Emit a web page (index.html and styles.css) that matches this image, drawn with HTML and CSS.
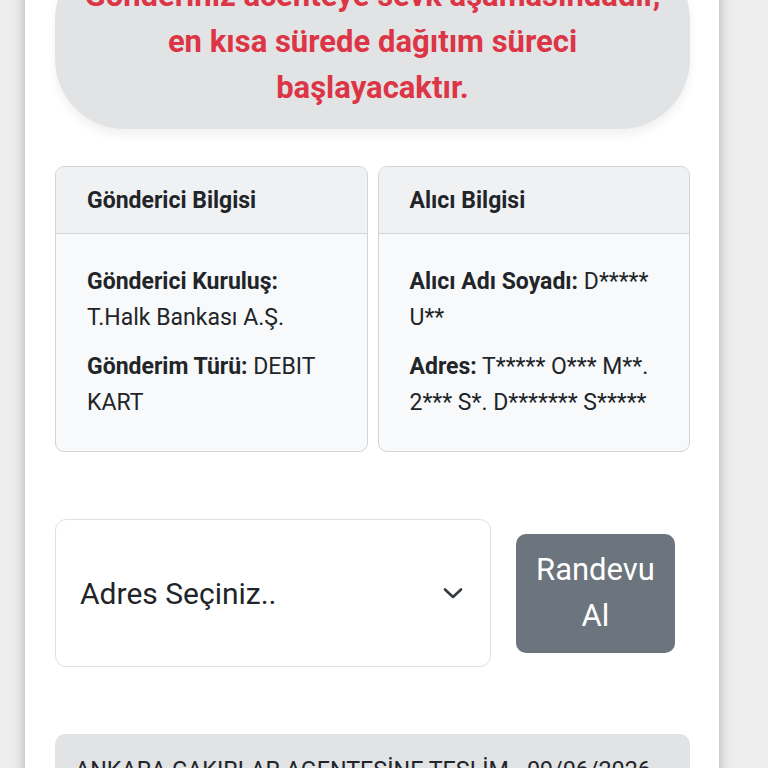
FILE: index.html
```html
<!DOCTYPE html>
<html lang="tr">
<head>
<meta charset="utf-8">
<link rel="stylesheet" href="styles.css">
</head>
<body>
<div class="panel">
  <div class="alert">Gönderiniz acenteye sevk aşamasındadır, en kısa sürede dağıtım süreci başlayacaktır.</div>

  <div class="cards">
    <div class="card">
      <div class="card-header">Gönderici Bilgisi</div>
      <div class="card-body">
        <p><b>Gönderici Kuruluş:</b> T.Halk Bankası A.Ş.</p>
        <p><b>Gönderim Türü:</b> DEBIT KART</p>
      </div>
    </div>
    <div class="card">
      <div class="card-header">Alıcı Bilgisi</div>
      <div class="card-body">
        <p><b>Alıcı Adı Soyadı:</b> D***** U**</p>
        <p><b>Adres:</b> T***** O*** M**. 2*** S*. D******* S*****</p>
      </div>
    </div>
  </div>

  <div class="appt">
    <div class="select">
      <span>Adres Seçiniz..</span>
      <svg class="chev" width="22" height="14" viewBox="0 0 22 14"><path d="M3 3.5 L11 11 L19 3.5" fill="none" stroke="#343a40" stroke-width="2.6" stroke-linecap="round" stroke-linejoin="round"/></svg>
    </div>
    <button class="btn">Randevu Al</button>
  </div>

  <div class="status">ANKARA ÇAKIRLAR AGENTESİNE TESLİM - 09/06/2026</div>
</div>
</body>
</html>
```

FILE: styles.css
```css
html, body {
  margin: 0;
  padding: 0;
  background: #eeeeee;
  font-family: Roboto, "Noto Sans", sans-serif;
  color: #212529;
  overflow: hidden;
}
.panel {
  width: 694px;
  margin-left: 25px;
  height: 900px;
  background: #ffffff;
  box-shadow: 0 0 12px rgba(0,0,0,0.28);
  padding: 0 29px 0 30px;
  box-sizing: border-box;
}
.alert {
  margin-top: -50px;
  background: #e2e3e5;
  color: #dc3545;
  font-weight: 700;
  font-size: 31px;
  line-height: 46px;
  text-align: center;
  padding: 23px 24px 18px;
  border-radius: 70px;
  box-shadow: 0 6px 10px rgba(0,0,0,0.06);
}
.cards {
  margin-top: 37px;
  display: flex;
  gap: 10px;
}
.card {
  flex: 1;
  border: 1px solid #d3d4d6;
  border-radius: 9px;
  background: #f8f9fa;
  overflow: hidden;
}
.card-header {
  height: 67px;
  box-sizing: border-box;
  padding: 0 31px;
  display: flex;
  align-items: center;
  background: #f0f1f2;
  border-bottom: 1px solid #d3d4d6;
  font-weight: 700;
  font-size: 23px;
}
.card-body {
  padding: 30px 31px 17px;
  font-size: 23px;
  line-height: 36px;
}
.card-body p {
  margin: 0 0 13px;
}
.card-body b {
  font-weight: 700;
}
.appt {
  margin-top: 67px;
  display: flex;
  align-items: center;
  gap: 25px;
}
.select {
  width: 436px;
  height: 148px;
  flex: none;
  box-sizing: border-box;
  border: 1px solid #dee2e6;
  border-radius: 11px;
  background: #fff;
  display: flex;
  align-items: center;
  justify-content: space-between;
  padding: 0 26px 0 24px;
  font-size: 30px;
}
.btn {
  width: 159px;
  height: 119px;
  flex: none;
  border: none;
  border-radius: 10px;
  background: #6c757d;
  color: #fff;
  font-family: Roboto, "Noto Sans", sans-serif;
  font-size: 31px;
  line-height: 46px;
  padding: 0 6px;
}
.status {
  margin-top: 67px;
  background: #e2e3e5;
  border-radius: 10px;
  padding: 22px 20px;
  font-size: 23.3px;
  color: #212529;
  white-space: nowrap;
  overflow: hidden;
}
```
